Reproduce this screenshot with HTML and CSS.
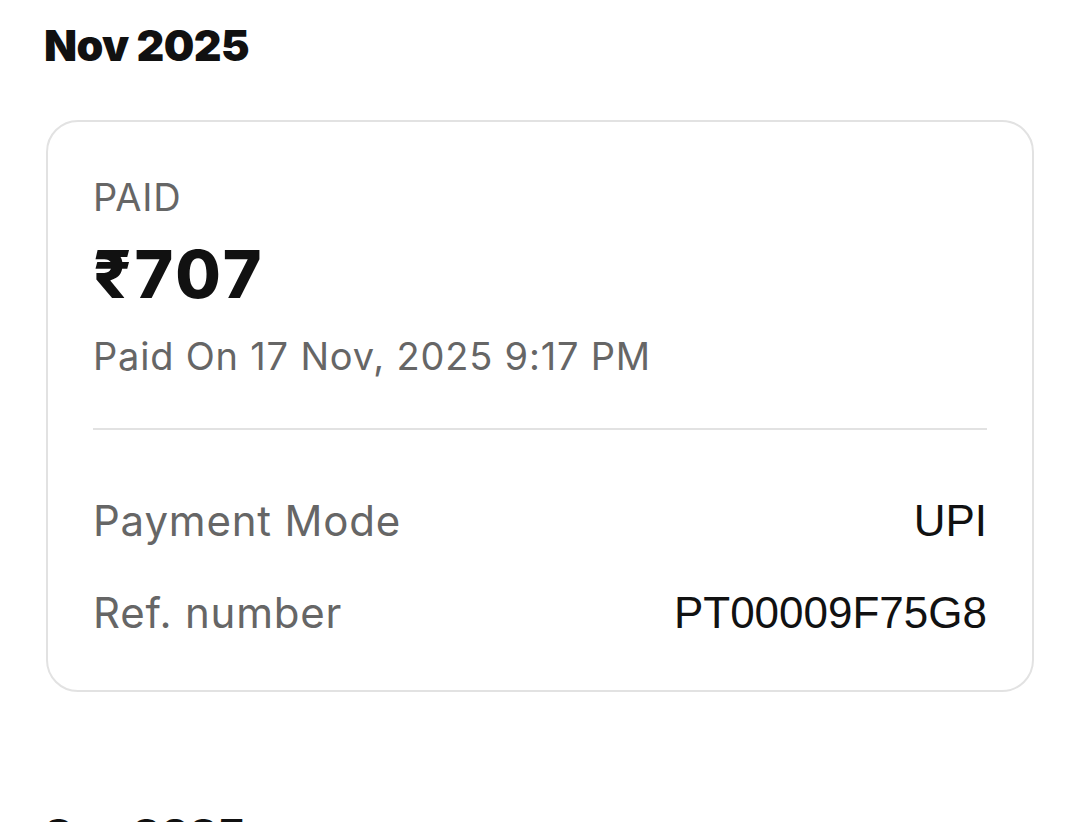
FILE: index.html
```html
<!DOCTYPE html>
<html lang="en">
<head>
<meta charset="utf-8">
<title>Payments</title>
<link rel="stylesheet" href="styles.css">
</head>
<body>
<main class="history">
  <section class="month">
    <h2 class="month-title">Nov 2025</h2>
    <article class="payment-card">
      <div class="status">PAID</div>
      <div class="amount">₹707</div>
      <div class="paid-on">Paid On 17 Nov, 2025 9:17 PM</div>
      <hr class="divider">
      <div class="detail-row">
        <span class="detail-label">Payment Mode</span>
        <span class="detail-value">UPI</span>
      </div>
      <div class="detail-row">
        <span class="detail-label">Ref. number</span>
        <span class="detail-value">PT00009F75G8</span>
      </div>
    </article>
  </section>
  <section class="month">
    <h2 class="month-title">Sep 2025</h2>
  </section>
</main>
</body>
</html>
```
FILE: styles.css
```css
* { box-sizing: border-box; }

html, body {
  margin: 0;
  background: #ffffff;
}

body {
  font-family: Inter, "Liberation Sans", sans-serif;
  color: #111111;
}

.history {
  padding: 15px 46px 0 46px;
}

.month {
  margin-bottom: 112px;
}

.month-title {
  margin: 0 0 0 -2px;
  font-family: Inter, sans-serif;
  font-weight: 900;
  font-size: 43px;
  line-height: 60px;
  letter-spacing: -0.6px;
  color: #111111;
}

.payment-card {
  margin-top: 45px;
  border: 2px solid #e2e2e2;
  border-radius: 32px;
  padding: 53px 45px 51px 45px;
}

.status {
  font-size: 38px;
  line-height: 44px;
  letter-spacing: 0.8px;
  color: #666666;
}

.amount {
  margin-top: 15px;
  font-weight: 800;
  font-size: 66px;
  line-height: 80px;
  letter-spacing: 3px;
  color: #111111;
}

.paid-on {
  margin-top: 20px;
  font-size: 38px;
  line-height: 44px;
  letter-spacing: 0.8px;
  color: #666666;
}

.divider {
  margin: 50px 0 65px;
  border: 0;
  border-top: 2px solid #e2e2e2;
}

.detail-row {
  display: flex;
  justify-content: space-between;
  align-items: baseline;
  line-height: 52px;
}

.detail-row + .detail-row {
  margin-top: 40px;
}

.detail-label {
  font-size: 42px;
  letter-spacing: 0.8px;
  color: #666666;
}

.detail-value {
  font-family: "Liberation Sans", sans-serif;
  font-size: 44px;
  color: #111111;
}
```
